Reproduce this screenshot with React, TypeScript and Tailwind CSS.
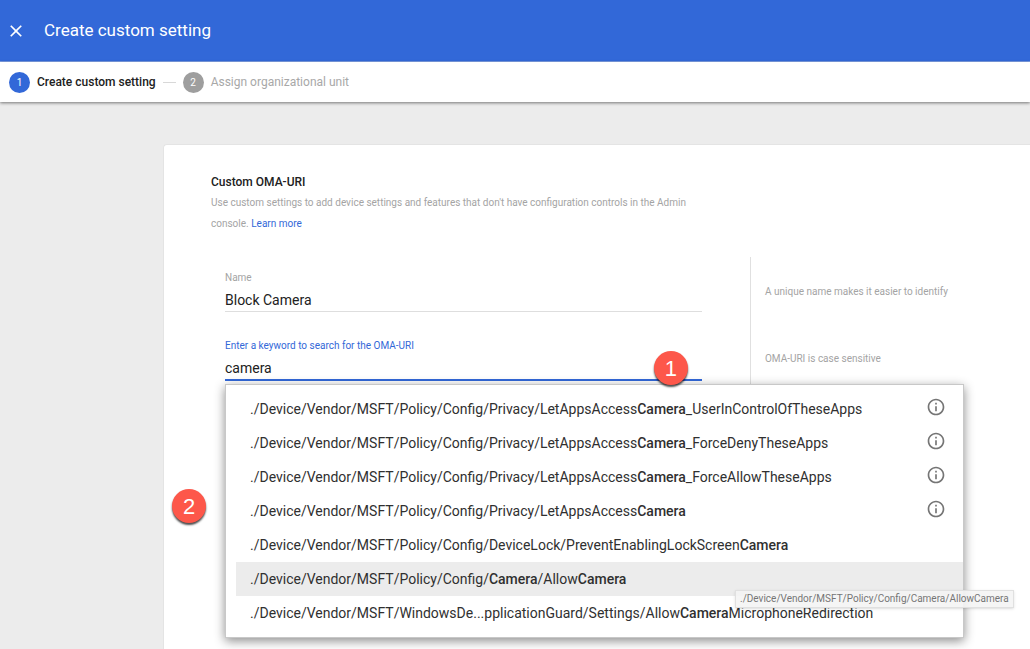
import { useState } from 'react';
import { MdClose, MdInfoOutline } from 'react-icons/md';

interface Suggestion {
  uri: string;
  hasInfo?: boolean;
}

const suggestions: Suggestion[] = [
  { uri: './Device/Vendor/MSFT/Policy/Config/Privacy/LetAppsAccessCamera_UserInControlOfTheseApps', hasInfo: true },
  { uri: './Device/Vendor/MSFT/Policy/Config/Privacy/LetAppsAccessCamera_ForceDenyTheseApps', hasInfo: true },
  { uri: './Device/Vendor/MSFT/Policy/Config/Privacy/LetAppsAccessCamera_ForceAllowTheseApps', hasInfo: true },
  { uri: './Device/Vendor/MSFT/Policy/Config/Privacy/LetAppsAccessCamera', hasInfo: true },
  { uri: './Device/Vendor/MSFT/Policy/Config/DeviceLock/PreventEnablingLockScreenCamera' },
  { uri: './Device/Vendor/MSFT/Policy/Config/Camera/AllowCamera' },
  { uri: './Device/Vendor/MSFT/WindowsDe...pplicationGuard/Settings/AllowCameraMicrophoneRedirection' },
];

function Highlighted({ text }: { text: string }) {
  return (
    <span>
      {text.split(/(Camera)/).map((part, i) =>
        part === 'Camera' ? (
          <b key={i} className="font-medium">
            {part}
          </b>
        ) : (
          part
        )
      )}
    </span>
  );
}

function Marker({ label, className }: { label: string; className: string }) {
  return (
    <span
      className={`absolute z-30 flex size-[34px] items-center justify-center rounded-full bg-[#fd574a] font-['Liberation_Sans',sans-serif] text-[22px] text-white shadow-[0_2px_2px_rgba(0,0,0,0.7)] ${className}`}
    >
      {label}
    </span>
  );
}

function Stepper() {
  return (
    <ol className="relative z-10 flex h-10 items-center bg-white pl-[9px] text-[12px] shadow-[0_1px_3px_rgba(0,0,0,0.5)]">
      <li className="flex items-center gap-[7px] font-medium text-[#212121]">
        <span className="flex size-[21px] items-center justify-center rounded-full bg-[#3268d8] text-[10px] font-normal text-white">
          1
        </span>
        Create custom setting
      </li>
      <li className="flex items-center gap-[7px] text-[#a8a8a8]">
        <span className="ml-[7px] h-px w-[13px] bg-[#d8d8d8]" />
        <span className="flex size-[21px] items-center justify-center rounded-full bg-[#9e9e9e] text-[10px] text-white">
          2
        </span>
        Assign organizational unit
      </li>
    </ol>
  );
}

export default function App() {
  const [name, setName] = useState('Block Camera');
  const [keyword, setKeyword] = useState('camera');
  const [active, setActive] = useState(5);

  return (
    <div className="flex min-h-screen flex-col overflow-hidden bg-[#ececec] font-[Roboto,sans-serif] text-[#212121]">
      <header className="flex h-[62px] items-center gap-[18px] border-b border-[#7d9fe6] bg-[#3268d8] pl-[6px] text-white">
        <button type="button" aria-label="Close">
          <MdClose className="size-5" />
        </button>
        <h1 className="text-[17px]">Create custom setting</h1>
      </header>
      <Stepper />

      <main className="flex flex-1 pt-[42px] pl-[163px]">
        <section className="flex-1 rounded-tl border-t border-l border-[#e4e4e4] bg-white pt-7 pr-[9px] pl-[47px]">
          <h2 className="text-[12px] leading-[19px] font-medium">Custom OMA-URI</h2>
          <p className="max-w-lg text-[10px] leading-[21px] text-[#a4a4a4]">
            Use custom settings to add device settings and features that don't have configuration controls in the Admin
            console.{' '}
            <a href="#" className="text-[#3268d8]">
              Learn more
            </a>
          </p>

          <div className="mt-[23px] flex">
            <div className="flex w-2/3 flex-col gap-[26px] border-r border-[#e0e0e0] pt-[13px] pr-12 pb-[240px] pl-[14px]">
              <div className="flex flex-col gap-0.5">
                <label htmlFor="name" className="text-[10px] leading-4 text-[#a4a4a4]">
                  Name
                </label>
                <input
                  id="name"
                  value={name}
                  onChange={(e) => setName(e.target.value)}
                  className="h-6 w-full border-b border-[#dedede] text-[14px] outline-none"
                />
              </div>

              <div className="relative flex flex-col gap-0.5">
                <label htmlFor="keyword" className="text-[10px] leading-4 text-[#3268d8]">
                  Enter a keyword to search for the OMA-URI
                </label>
                <input
                  id="keyword"
                  value={keyword}
                  onChange={(e) => setKeyword(e.target.value)}
                  className="h-[25px] w-full border-b-2 border-[#3268d8] text-[14px] outline-none"
                />
                <Marker label="1" className="top-[13px] right-[14px]" />

                {/* Suggestions */}
                <ul className="absolute top-[46px] left-0 z-20 w-[739px] border border-[#c8c8c8] bg-white py-[7px] pl-[10px] text-[#303030] shadow-[0_3px_10px_rgba(0,0,0,0.45)]">
                  {suggestions.map((item, i) => (
                    <li key={item.uri} className="relative">
                      <button
                        type="button"
                        onMouseEnter={() => setActive(i)}
                        className={`flex h-[34px] w-full items-center justify-between pr-[17px] pl-[14px] text-left text-[14px] ${
                          active === i ? 'bg-[#ececec]' : ''
                        }`}
                      >
                        <Highlighted text={item.uri} />
                        {item.hasInfo && <MdInfoOutline className="mb-1 size-5 text-[#757575]" />}
                      </button>
                      {active === i && (
                        <span
                          role="tooltip"
                          className="absolute top-[28px] left-[499px] z-10 border border-[#e0e0e0] bg-[#f4f4f4]/90 px-1 text-[10px] leading-4 whitespace-nowrap text-[#757575] shadow-sm"
                        >
                          {item.uri}
                        </span>
                      )}
                    </li>
                  ))}
                  <li aria-hidden="true">
                    <Marker label="2" className="top-[104px] -left-[54px]" />
                  </li>
                </ul>
              </div>
            </div>

            <aside className="flex w-1/3 flex-col gap-[47px] pt-[25px] pl-[14px] text-[10px] leading-5 text-[#a4a4a4]">
              <p>A unique name makes it easier to identify</p>
              <p>OMA-URI is case sensitive</p>
            </aside>
          </div>
        </section>
      </main>
    </div>
  );
}
